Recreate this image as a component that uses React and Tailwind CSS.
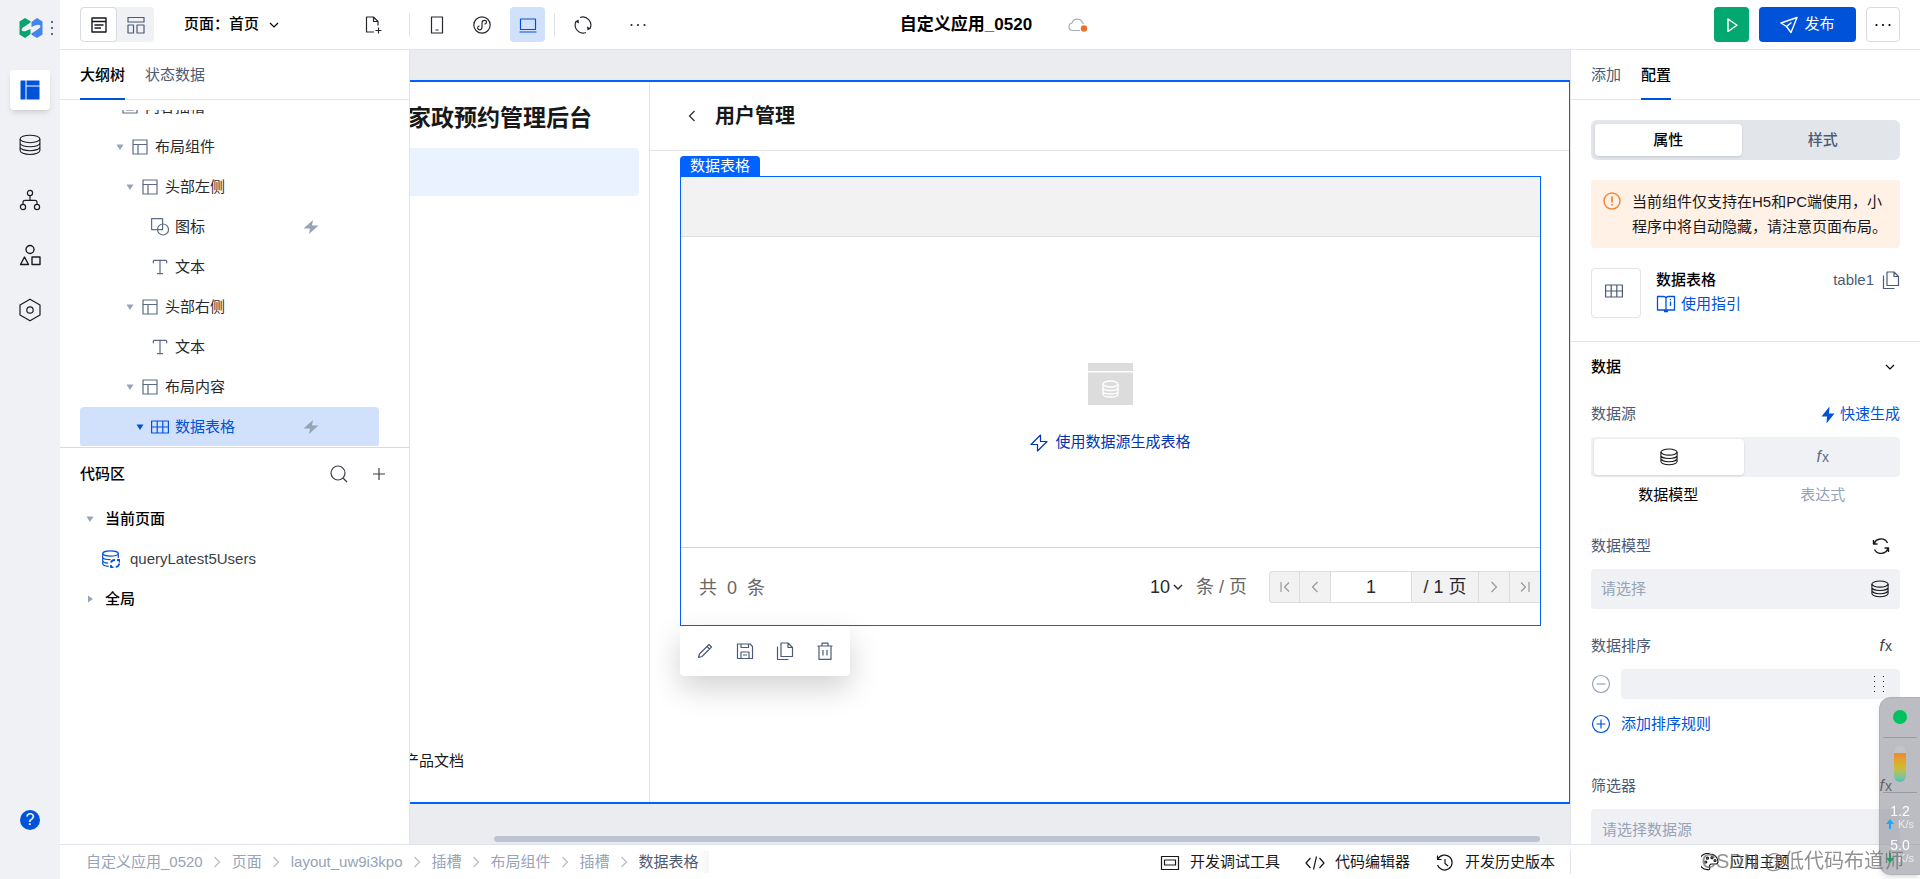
import { useState } from 'react';
import { Type } from 'lucide-react';

const sans = "font-['Liberation_Sans','Noto_Sans_CJK_SC',sans-serif]";

function Icon({ size = 20, box = 20, width = 1.2, className = '', children }) {
  return (
    <svg
      width={size}
      height={size}
      viewBox={`0 0 ${box} ${box}`}
      fill="none"
      stroke="currentColor"
      strokeWidth={width}
      strokeLinejoin="round"
      className={`shrink-0 ${className}`}
      aria-hidden="true"
    >
      {children}
    </svg>
  );
}

const DatabaseIcon = (props) => (
  <Icon {...props}>
    <ellipse cx="10" cy="4.5" rx="9" ry="3.4" />
    <path d="M1 4.5V15c0 2 4 3.6 9 3.6s9-1.6 9-3.6V4.5M1 8.2c0 1.9 4 3.4 9 3.4s9-1.5 9-3.4M1 11.8c0 1.9 4 3.4 9 3.4s9-1.5 9-3.4" />
  </Icon>
);

const LayoutIcon = (props) => (
  <Icon box={18} size={18} {...props}>
    <path d="M2 2h14v14H2zM2 6.5h14M7 6.5V16" />
  </Icon>
);

const ShapesIcon = (props) => (
  <Icon box={18} size={18} {...props}>
    <path d="M.6.6h11v11H.6z" />
    <circle cx="12" cy="11.5" r="5.5" />
  </Icon>
);

const GridIcon = (props) => (
  <Icon box={18} size={18} {...props}>
    <path d="M.6 3h16.8v12H.6zM.6 9h16.8M6.2 3v12M11.8 3v12" />
  </Icon>
);

const TextIcon = (props) => <Type size={20} strokeWidth={1.5} className="-mx-px shrink-0" {...props} />;

const SlotIcon = (props) => (
  <Icon box={18} size={18} {...props}>
    <path d="M2 3h14v12H2zM5 12h8M5 9h8" />
  </Icon>
);

const BoltIcon = (props) => (
  <Icon box={16} size={16} {...props}>
    <path d="M10 1 .5 9.500h6.500L6 15l9.500-8.500H9z" fill="currentColor" stroke="none" />
  </Icon>
);

const BoltOutlineIcon = (props) => (
  <Icon box={18} size={18} {...props}>
    <path d="M10.5 1 1 10.500h6.500V17L17 7.500h-6.500z" />
  </Icon>
);

const ChevronDown = (props) => (
  <Icon box={12} size={12} width={1.4} {...props}>
    <path d="m2 4 4 4 4-4" strokeLinejoin="miter" />
  </Icon>
);

const ChevronRight = (props) => (
  <Icon box={12} size={12} {...props}>
    <path d="m3.5 1 5 5-5 5" strokeLinejoin="miter" />
  </Icon>
);

const ChevronLeft = (props) => (
  <Icon box={12} size={12} {...props}>
    <path d="m8.5 1-5 5 5 5" strokeLinejoin="miter" />
  </Icon>
);

const CopyIcon = (props) => (
  <Icon box={18} size={18} {...props}>
    <path d="M5 1h7l4.5 4.5v9H5zM12 1v4.5h4.5M1.500 4.500v13h11" />
  </Icon>
);

const MoreIcon = (props) => (
  <Icon box={18} size={18} {...props}>
    <g fill="currentColor" stroke="none">
      <circle cx="2.5" cy="9" r="1.1" />
      <circle cx="9" cy="9" r="1.1" />
      <circle cx="15.5" cy="9" r="1.1" />
    </g>
  </Icon>
);

const Fx = ({ className = '' }) => (
  <span className={`inline-flex items-baseline gap-px leading-5 ${className}`}>
    <span className="font-['Liberation_Sans',sans-serif] text-base leading-5 italic">f</span>
    <span className="text-sm leading-5">x</span>
  </span>
);

function Caret({ open = true, className = '' }) {
  return (
    <svg width="12" height="12" viewBox="0 0 12 12" className={`shrink-0 ${className}`} aria-hidden="true">
      <path d={open ? 'M2.500 3.500h7L6 9z' : 'M4 2.500v7L9 6z'} fill="currentColor" />
    </svg>
  );
}

const tree = [
  { label: '内容插槽', icon: SlotIcon, pad: 'pl-[24px]', caret: false },
  { label: '布局组件', icon: LayoutIcon, pad: 'pl-[34px]', caret: true },
  { label: '头部左侧', icon: LayoutIcon, pad: 'pl-[44px]', caret: true },
  { label: '图标', icon: ShapesIcon, pad: 'pl-[54px]', caret: false, bolt: true },
  { label: '文本', icon: TextIcon, pad: 'pl-[54px]', caret: false },
  { label: '头部右侧', icon: LayoutIcon, pad: 'pl-[44px]', caret: true },
  { label: '文本', icon: TextIcon, pad: 'pl-[54px]', caret: false },
  { label: '布局内容', icon: LayoutIcon, pad: 'pl-[44px]', caret: true },
  { label: '数据表格', icon: GridIcon, pad: 'pl-[54px]', caret: true, bolt: true, active: true },
];

const crumbs = ['自定义应用_0520', '页面', 'layout_uw9i3kpo', '插槽', '布局组件', '插槽', '数据表格'];

function Rail() {
  const items = [
    {
      label: '数据源',
      icon: <DatabaseIcon size={22} width={1} />,
    },
    {
      label: '流程',
      icon: (
        <Icon size={22} box={22}>
          <circle cx="11" cy="4" r="2.6" />
          <circle cx="4" cy="18" r="2.6" />
          <circle cx="18" cy="18" r="2.6" />
          <path d="M11 6.6v4.900M4 15.400v-2q0-2 2-2h10q2 0 2 2v2" />
        </Icon>
      ),
    },
    {
      label: '组件',
      icon: (
        <Icon size={22} box={22} width={1.4}>
          <circle cx="11" cy="5.5" r="4" />
          <path d="M5.5 13 9.500 20.500h-8zM13 13h8v7.500h-8z" />
        </Icon>
      ),
    },
    {
      label: '设置',
      icon: (
        <Icon size={24} box={24}>
          <path d="M12 1.200 22 7v10l-10 5.800L2 17V7z" />
          <circle cx="12" cy="12" r="3.2" />
        </Icon>
      ),
    },
  ];

  return (
    <nav className="flex w-15 shrink-0 flex-col items-center bg-[#f0f1f5] pb-[49px]">
      <div className="flex h-[55px] w-full items-center gap-1 pl-[19px]">
        <svg width="24" height="20" viewBox="0 0 23 20" aria-hidden="true">
          <path d="M0 3.500 5.500 0 11 3.200v1.300L3.500 9.500q-2.500 2-.5 3.500 1.500.8 4-.3L11 11v5l-5.500 4L0 16.500z" fill="#07a56d" />
          <path d="M23 16.500 17.500 20 12 16.800v-1.300l7.500-5q2.500-2 .5-3.500-1.500-.8-4 .3L12 9V4l5.500-4L23 3.500z" fill="#4285f0" />
        </svg>
        <button type="button" aria-label="菜单" className="flex flex-col gap-1 px-1">
          <span className="size-0.5 bg-[#5d6b85]" />
          <span className="size-0.5 bg-[#5d6b85]" />
          <span className="size-0.5 bg-[#5d6b85]" />
        </button>
      </div>
      <div className="mt-[15px] flex flex-col gap-[15px]">
        <button type="button" aria-label="页面设计" className="flex size-10 items-center justify-center rounded bg-white shadow-md">
          <svg width="20" height="20" viewBox="0 0 20 20" aria-hidden="true">
            <path d="M1 .5h4.500v19H1q-.5 0-.5-.5V1q0-.5.5-.5zM6.500.5H19q.5 0 .5.5v4.500h-13zM6.500 6.500h13V19q0 .5-.5.5H6.500z" fill="#0052d9" />
          </svg>
        </button>
        {items.map((item) => (
          <button key={item.label} type="button" aria-label={item.label} className="flex size-10 items-center justify-center text-[#1a1c22]">
            {item.icon}
          </button>
        ))}
      </div>
      <button type="button" aria-label="帮助" className="mt-auto size-5 rounded-full bg-[#0052d9] text-center text-base leading-5 text-white">
        ?
      </button>
    </nav>
  );
}

function Header() {
  return (
    <header className="grid h-[50px] shrink-0 grid-cols-[1fr_auto_1fr] items-center border-b border-[#e2e4e8] bg-white px-5">
      <div className="flex items-center">
        <div className="flex h-[35px] items-center rounded bg-[#f0f1f5]">
          <button type="button" aria-label="大纲" className="flex h-[35px] w-[37px] items-center justify-center rounded border border-[#d5dae3] bg-white text-[#15171c]">
            <Icon size={18} box={18} width={1.4}>
              <path d="M2 2h14v14H2zM2 5.500h14M4.500 9h9M4.500 12h6.500" />
            </Icon>
          </button>
          <button type="button" aria-label="布局" className="flex h-[35px] w-[37px] items-center justify-center text-[#4b5b76]">
            <Icon size={18} box={18}>
              <path d="M1 1.500h16V6H1zM1 9h5.500v8H1zM10 9h7v8h-7z" />
            </Icon>
          </button>
        </div>
        <button type="button" className="ml-[30px] flex items-center gap-[9px] text-[15px] font-medium whitespace-nowrap text-black">
          页面：首页
          <ChevronDown width={1.2} />
        </button>
        <button type="button" aria-label="新建页面" className="ml-[85px] text-[#26282e]">
          <Icon size={18} box={18}>
            <path d="M9 16H1.500V1h7L13 5.500v4M8.500 1v4.500H13M13.500 11.500v6M10.500 14.500h6" />
          </Icon>
        </button>
        <span className="ml-[26px] h-6 w-px bg-[#dfe2e8]" />
        <button type="button" aria-label="手机" className="ml-[18px] text-[#26282e]">
          <Icon size={18} box={18}>
            <path d="M3.500 1h11v16h-11zM7.500 14h3" />
          </Icon>
        </button>
        <button type="button" aria-label="小程序" className="ml-[27px] text-[#26282e]">
          <Icon size={18} box={18}>
            <circle cx="9" cy="9" r="8.2" />
            <path d="M11.500 8.300c3-.9 2.500-4 0-4S9 6.300 9 7v4c0 1-.5 2.800-2.500 2.800s-3-3 0-4" />
          </Icon>
        </button>
        <button type="button" aria-label="电脑" className="ml-[19px] flex size-[35px] items-center justify-center rounded bg-[#d2e1fb] text-[#0052d9]">
          <Icon size={18} box={18}>
            <path d="M1.500 3h15v10.500h-15zM.5 16h17" />
          </Icon>
        </button>
        <span className="ml-[9px] h-6 w-px bg-[#dfe2e8]" />
        <button type="button" aria-label="刷新" className="ml-[19px] text-[#26282e]">
          <Icon size={18} box={18}>
            <path d="M6 1.500A8 8 0 0 1 16 12.500M12 16.500A8 8 0 0 1 2 5.500" />
            <path d="M1 5.500 4.500 3.500 5 7.500zM17 12.500 13.500 14.500 13 10.500z" fill="currentColor" stroke="none" />
          </Icon>
        </button>
        <button type="button" aria-label="更多" className="ml-[37px] text-[#26282e]">
          <MoreIcon />
        </button>
      </div>

      <div className="flex items-center pl-2">
        <h1 className="text-[17px] font-bold text-black">自定义应用_0520</h1>
        <button type="button" aria-label="未保存" className="ml-9">
          <svg width="20" height="16" viewBox="0 0 20 16" aria-hidden="true">
            <path d="M12 13.500H4.500a3.800 3.800 0 0 1-.5-7.500 5.500 5.500 0 0 1 10.500 0q.5 0 1.500.5" fill="none" stroke="#a3adbd" strokeWidth="1.2" />
            <circle cx="16" cy="11.500" r="3.2" fill="#eb6f2d" />
          </svg>
        </button>
      </div>

      <div className="flex items-center justify-end gap-[10px]">
        <button type="button" aria-label="预览" className="flex size-[35px] items-center justify-center rounded bg-[#02a870] text-white">
          <Icon size={18} box={18} width={1.5}>
            <path d="M5 3v12.500l9-6.250z" />
          </Icon>
        </button>
        <button type="button" className="flex h-[35px] w-[97px] items-center justify-center gap-1.5 rounded bg-[#0052d9] text-[15px] text-white">
          <Icon size={18} box={18} width={1.4}>
            <path d="M17 1.500 1 7l5.500 3.500L11 16.500zM6.500 10.500l5-4" />
          </Icon>
          发布
        </button>
        <button type="button" aria-label="更多操作" className="flex h-[35px] w-[34px] items-center justify-center rounded border border-[#d5dae3] text-black">
          <MoreIcon />
        </button>
      </div>
    </header>
  );
}

function OutlinePanel() {
  return (
    <aside className="flex w-[350px] shrink-0 flex-col border-r border-[#e2e4e8] bg-white">
      <div className="flex h-[50px] shrink-0 gap-5 border-b border-[#e2e4e8] px-5 text-[15px]">
        <button type="button" className="-mb-px border-b-2 border-[#0052d9] pt-[3px] font-medium text-black">大纲树</button>
        <button type="button" className="-mb-px border-b-2 border-transparent pt-[3px] text-[#4b5b76]">状态数据</button>
      </div>

      <div className="mt-[10px] mb-px h-[336px] shrink-0 overflow-hidden pr-[30px] pl-5">
        <ul className="-mt-[23px]">
          {tree.map((node, i) => (
            <li
              key={i}
              className={`flex h-10 items-center pr-[60px] text-[15px] ${node.pad} ${node.active ? 'rounded bg-[#d2e1fb] text-[#0052d9]' : 'text-[#26282e]'}`}
            >
              <span className={`mr-[5px] w-3 ${node.active ? '' : 'text-[#97a3b7]'}`}>
                {node.caret && <Caret />}
              </span>
              <span className={node.active ? '' : 'text-[#5d6b85]'}>
                <node.icon />
              </span>
              <span className="ml-1.5">{node.label}</span>
              {node.bolt && <BoltIcon className="ml-auto text-[#97a3b7]" />}
            </li>
          ))}
        </ul>
      </div>

      <section className="flex-1 border-t border-[#d5d9e2]">
        <div className="flex h-[51px] items-center pt-px pr-[21px] pl-5">
          <h2 className="flex-1 text-[15px] font-medium text-black">代码区</h2>
          <button type="button" aria-label="搜索" className="text-[#3c3f47]">
            <Icon size={18} box={18}>
              <circle cx="8" cy="8" r="7" />
              <path d="m13 13 4 4" />
            </Icon>
          </button>
          <button type="button" aria-label="新增" className="ml-[22px] text-[#3c3f47]">
            <Icon size={18} box={18}>
              <path d="M9 3v12M3 9h12" />
            </Icon>
          </button>
        </div>
        <ul className="pl-6 text-[15px]">
          <li className="flex h-10 items-center gap-[9px] font-medium text-black">
            <Caret className="text-[#97a3b7]" />
            当前页面
          </li>
          <li className="flex h-10 items-center gap-[10px] pl-[18px] text-[#3c3f47]">
            <Icon size={18} box={18} className="text-[#0052d9]">
              <ellipse cx="8.5" cy="3.5" rx="7.8" ry="2.7" />
              <path d="M.7 3.500v10c0 1.500 2.500 2.700 6 2.800M16.300 3.500V8M.7 7c0 1.500 3.500 2.700 7.800 2.700M.7 10.500c0 1.500 2.500 2.500 5.500 2.700" />
              <path d="M9 12.500a4 4 0 0 1 4-2.500M9 15v2.300h2.500M17.300 13.500a4 4 0 0 1-3.500 3.500M17.500 12.500V10H15" strokeWidth="1.8" />
            </Icon>
            queryLatest5Users
          </li>
          <li className="flex h-10 items-center gap-[9px] font-medium text-black">
            <Caret open={false} className="text-[#97a3b7]" />
            全局
          </li>
        </ul>
      </section>
    </aside>
  );
}

function Pagination() {
  const [page, setPage] = useState('1');
  const arrow = 'flex w-[31px] items-center justify-center border-l border-[#dcdcdc] text-[#999]';

  return (
    <div className="flex h-[77px] items-center justify-between pl-[18px] text-lg">
      <p className="pt-[3px] text-[#666]">共&nbsp; 0 &nbsp;条</p>
      <div className="flex items-center pt-px">
        <label className="relative flex items-center text-[#26282e]">
          <select defaultValue="10" aria-label="每页条数" className="w-[34px] appearance-none bg-transparent">
            <option>10</option>
            <option>20</option>
          </select>
          <ChevronDown className="pointer-events-none absolute right-0" />
        </label>
        <span className="ml-3 text-[#666]">条 / 页</span>
        <div className="ml-[22px] flex h-8 overflow-hidden rounded-l border border-r-0 border-[#dcdcdc] bg-[#f2f2f2]">
          <button type="button" aria-label="第一页" className="flex w-[29px] items-center justify-center text-[#999]">
            <Icon size={12} box={12}><path d="M2 1v10M10 1.500 5.500 6l4.500 4.500" /></Icon>
          </button>
          <button type="button" aria-label="上一页" className={arrow}><ChevronLeft /></button>
          <input
            aria-label="页码"
            value={page}
            onChange={(e) => setPage(e.target.value)}
            className="w-[81px] border-l border-[#dcdcdc] bg-white text-center text-[#26282e]"
          />
          <span className="flex w-[67px] items-center justify-center border-l border-[#dcdcdc] text-[#26282e]">/ 1 页</span>
          <button type="button" aria-label="下一页" className={arrow}><ChevronRight /></button>
          <button type="button" aria-label="最后一页" className={arrow}>
            <Icon size={12} box={12}><path d="M10 1v10M2 1.500 6.500 6 2 10.500" /></Icon>
          </button>
        </div>
      </div>
    </div>
  );
}

function Canvas() {
  return (
    <main className="flex min-w-0 flex-1 flex-col overflow-hidden bg-[#ebecf0] pt-[30px]">
      <div className="flex min-h-0 flex-1 border-y-2 border-r border-[#0062ff] bg-white">
        <div className="flex w-60 shrink-0 flex-col overflow-hidden border-r border-[#e2e4e8] pr-[10px] pb-[27px]">
          <h2 className="-ml-0.5 flex h-[66px] items-center pt-1.5 text-[23px] font-bold whitespace-nowrap text-[#181818]">家政预约管理后台</h2>
          <div className="h-12 rounded-r bg-[#ebf2ff]" />
          <a href="#docs" className="mt-auto -ml-1.5 text-[15px] leading-7 text-[#181818]">产品文档</a>
        </div>

        <div className="flex min-w-0 flex-1 flex-col">
          <div className="flex h-[69px] shrink-0 items-center border-b border-[#e2e4e8] pl-9 text-xl font-bold text-[#181818]">
            <button type="button" aria-label="返回"><ChevronLeft className="text-[#26282e]" /></button>
            <h2 className="ml-[17px]">用户管理</h2>
          </div>

          <div className="flex flex-col items-start pt-[5px] pr-7 pl-[30px]">
            <span className="h-5 rounded-t bg-[#0062ff] px-[10px] text-[15px] leading-5 text-white">数据表格</span>
            <div className="w-full border border-[#0062ff]">
              <table className="w-full border-b border-[#d2d2d2]">
                <thead>
                  <tr className="h-[59px] border-b border-[#dcdcdc] bg-[#f2f2f2]">
                    <th aria-label="列" />
                  </tr>
                </thead>
                <tbody>
                  <tr className="h-[311px]">
                    <td className="pt-[34px] align-middle">
                      <div className="flex flex-col items-center">
                        <svg width="45" height="42" viewBox="0 0 45 42" aria-hidden="true">
                          <path d="M0 0h45v8H0zM0 9.500h45V42H0z" fill="#dcdcdc" />
                          <g fill="none" stroke="#fff" strokeWidth="1.3">
                            <ellipse cx="22.5" cy="21" rx="7.5" ry="3" />
                            <path d="M15 21v10c0 1.700 3.300 3 7.500 3s7.500-1.300 7.500-3V21M15 24.500c0 1.700 3.300 3 7.500 3s7.500-1.300 7.500-3M15 28c0 1.700 3.300 3 7.500 3s7.500-1.300 7.500-3" />
                          </g>
                        </svg>
                        <button type="button" className="mt-[26px] flex items-center gap-[7px] text-[15px] text-[#0034b5]">
                          <BoltOutlineIcon />
                          使用数据源生成表格
                        </button>
                      </div>
                    </td>
                  </tr>
                </tbody>
              </table>
              <Pagination />
            </div>
            <div className="flex h-[50px] w-[170px] items-center justify-between rounded-b bg-white px-4 text-[#4b5b76] shadow-[0_12px_30px_rgba(0,0,0,0.18)]">
              <button type="button" aria-label="编辑">
                <Icon size={18} box={18}><path d="M2.500 15.500 3.500 12 13 2.500 15.500 5 6 14.500zM11 4.500 13.500 7" /></Icon>
              </button>
              <button type="button" aria-label="保存">
                <Icon size={18} box={18}><path d="M1.500 2H14l2.500 2.500v12h-15zM5 2v3.500h7.500V2M5 16.500V10h8v6.500M7 13h4" /></Icon>
              </button>
              <button type="button" aria-label="复制"><CopyIcon /></button>
              <button type="button" aria-label="删除">
                <Icon size={18} box={18}><path d="M1.500 4h15M3 4v13.400h12V4M6 4V1.200h6V4M7 8v5.500M11 8v5.500" /></Icon>
              </button>
            </div>
          </div>
        </div>
      </div>
      <div className="flex h-10 shrink-0 items-end pr-[30px] pb-0.5 pl-[84px]">
        <div className="h-1.5 w-full rounded-full bg-[#bcc4d0]" />
      </div>
    </main>
  );
}

function ConfigPanel() {
  return (
    <aside className="flex w-[350px] shrink-0 flex-col overflow-hidden border-l border-[#e2e4e8] bg-white text-[15px]">
      <div className="flex h-[50px] shrink-0 gap-5 border-b border-[#e2e4e8] px-5">
        <button type="button" className="-mb-px border-b-2 border-transparent pt-[3px] text-[#4b5b76]">添加</button>
        <button type="button" className="-mb-px border-b-2 border-[#0052d9] pt-[3px] font-medium text-black">配置</button>
      </div>

      <div className="border-b border-[#e2e4e8] px-5 pt-5 pb-[23px]">
        <div className="grid h-10 grid-cols-2 gap-2 rounded-md bg-[#e2e5ea] p-1 font-medium">
          <button type="button" className="rounded-sm bg-white text-black shadow-sm">属性</button>
          <button type="button" className="text-[#4b5b76]">样式</button>
        </div>

        <div className="mt-5 flex gap-[11px] rounded bg-[#fff1e5] px-3 py-[9px] leading-[25px] text-[#181818]">
          <Icon size={18} box={18} width={1.5} className="mt-[3px] text-[#f0883a]">
            <circle cx="9" cy="9" r="8" />
            <path d="M9 4.500v6M9 12v1.500" strokeWidth="1.8" />
          </Icon>
          <p>当前组件仅支持在H5和PC端使用，小程序中将自动隐藏，请注意页面布局。</p>
        </div>

        <div className="mt-5 flex">
          <span className="flex size-[50px] items-center justify-center rounded border border-[#e2e4e8] pr-1 pb-1 text-[#4b5b76]">
            <GridIcon />
          </span>
          <div className="ml-[15px] flex-1 leading-6">
            <p className="font-medium text-black">数据表格</p>
            <a href="#guide" className="flex items-center gap-[5px] text-[#0052d9]">
              <Icon size={20} box={20} width={1.3}>
                <path d="M1.500 2.500h6q2 0 2.500 1.500.5-1.500 2.500-1.500h6V16h-17zM10 4v12M8 17.500h4M14.500 7.500V12M14.500 5v1.200" />
              </Icon>
              使用指引
            </a>
          </div>
          <span className="flex h-6 items-center gap-2 text-[#4b5b76]">
            table1
            <button type="button" aria-label="复制标识"><CopyIcon /></button>
          </span>
        </div>
      </div>

      <div className="px-5">
        <div className="flex h-[50px] items-center justify-between pr-1">
          <h3 className="font-medium text-black">数据</h3>
          <button type="button" aria-label="收起"><ChevronDown width={1.2} /></button>
        </div>

        <div className="flex h-[45px] items-center justify-between">
          <span className="text-[#4b5b76]">数据源</span>
          <button type="button" className="flex items-center gap-1 text-[#0052d9]">
            <Icon size={16} box={16}>
              <path d="M9.500-.5 1.500 9.500H7L6.500 16.500l8-10H9z" fill="currentColor" stroke="none" />
            </Icon>
            快速生成
          </button>
        </div>
        <div className="grid grid-cols-2 text-center">
          <div className="flex h-10 rounded-l bg-[#f0f1f5] py-[2px] pr-[2px] pl-[3px]">
            <button type="button" aria-label="数据模型" className="flex flex-1 items-center justify-center rounded bg-white text-[#181818] shadow-sm">
              <DatabaseIcon size={18} />
            </button>
          </div>
          <button type="button" aria-label="表达式" className="h-10 rounded-r bg-[#f0f1f5] text-[#5d6b85]">
            <Fx />
          </button>
          <span className="pt-[7px] leading-[22px] text-black">数据模型</span>
          <span className="pt-[7px] leading-[22px] text-[#97a3b7]">表达式</span>
        </div>

        <div className="mt-[17px] flex h-[46px] items-center justify-between pr-[10px] text-[#4b5b76]">
          <label htmlFor="model">数据模型</label>
          <button type="button" aria-label="刷新数据模型" className="text-[#181818]">
            <Icon size={18} box={18} width={1.4}>
              <path d="M2 7a7.300 7.300 0 0 1 13.500-1M16 11A7.300 7.300 0 0 1 2.500 12.500M1.500 3v4h4M16.500 15v-4h-4" />
            </Icon>
          </button>
        </div>
        <div className="flex h-10 items-center rounded bg-[#f0f1f5] pr-[11px] pl-[10px] text-[#181818]">
          <input id="model" readOnly placeholder="请选择" className="min-w-0 flex-1 bg-transparent placeholder:text-[#97a3b7]" />
          <DatabaseIcon size={18} />
        </div>

        <div className="mt-[14px] flex h-[46px] items-center justify-between pr-2 text-[#4b5b76]">
          <label htmlFor="sort">数据排序</label>
          <button type="button" aria-label="排序表达式"><Fx className="text-[#3c3f47]" /></button>
        </div>
        <div className="flex items-center gap-[10px]">
          <button type="button" aria-label="删除规则" className="text-[#97a3b7]">
            <Icon size={20} box={20}>
              <circle cx="10" cy="10" r="8.5" />
              <path d="M5.500 10h9" />
            </Icon>
          </button>
          <div className="flex h-[30px] flex-1 items-center rounded bg-[#f0f1f5] pr-[14px]">
            <input id="sort" className="min-w-0 flex-1 bg-transparent" />
            <svg width="14" height="18" viewBox="0 0 14 18" fill="#26282e" aria-hidden="true">
              {[1, 6, 11, 16].map((y) => (
                <g key={y}>
                  <rect x="2" y={y} width="1" height="1" />
                  <rect x="11" y={y} width="1" height="1" />
                </g>
              ))}
            </svg>
          </div>
        </div>
        <button type="button" className="mt-[10px] flex h-[30px] items-center gap-[10px] text-[#0052d9]">
          <Icon size={20} box={20}>
            <circle cx="10" cy="10" r="8.5" />
            <path d="M5.500 10h9M10 5.500v9" />
          </Icon>
          添加排序规则
        </button>

        <div className="mt-6 flex h-[46px] items-center justify-between pr-2 text-[#4b5b76]">
          <label htmlFor="filter">筛选器</label>
          <button type="button" aria-label="筛选表达式"><Fx className="text-[#181818]" /></button>
        </div>
        <input id="filter" readOnly placeholder="请选择数据源" className="h-10 w-full rounded bg-[#f0f1f5] px-[11px] placeholder:text-[#97a3b7]" />
      </div>
    </aside>
  );
}

function Footer() {
  return (
    <footer className="flex h-[35px] shrink-0 items-center border-t border-[#dfe2ea] bg-white text-[15px] whitespace-nowrap text-[#181818]">
      <nav className="flex flex-1 items-center pl-[26px]">
        {crumbs.map((crumb, i) => (
          <span key={i} className="flex items-center">
            {i > 0 && (
              <span className="flex w-[29px] justify-center text-[#b4bdcb]">
                <ChevronRight />
              </span>
            )}
            <a href="#crumb" className={i === crumbs.length - 1 ? 'bg-linear-to-r from-white from-80% to-[#f5f6f9] pr-[10px] text-[#4b5b76]' : 'text-[#97a3b7]'}>
              {crumb}
            </a>
          </span>
        ))}
      </nav>
      <div className="flex items-center gap-[25px] pr-[15px]">
        <button type="button" className="flex items-center gap-[10px]">
          <Icon size={20} box={20}><path d="M1.500 4.500h17v13h-17zM4.500 8h11v5h-11z" /></Icon>
          开发调试工具
        </button>
        <button type="button" className="flex items-center gap-[10px]">
          <Icon size={20} box={20}><path d="M5.500 6 1 11l4.500 5M14.500 6l4.500 5-4.500 5M11.500 4.500l-3 13" /></Icon>
          代码编辑器
        </button>
        <button type="button" className="flex items-center gap-[10px]">
          <Icon size={20} box={20}><path d="M3 7a7.500 7.500 0 1 1-.5 6M2.500 3.500v4h4M10 7v4.500l3 2.500" /></Icon>
          开发历史版本
        </button>
      </div>
      <div className="flex h-6 w-[350px] items-center justify-center border-l border-[#dfe2e8]">
        <button type="button" className="flex items-center gap-[10px]">
          <Icon size={18} box={18}>
            <path d="M9 1a8 8 0 1 0-2 15.500c1.500.5 2-.5 1.500-2-.5-2 .5-3.500 2.500-3.500h3.500c1.500 0 2.500-.5 2.500-2.500A8 8 0 0 0 9 1z" />
            <circle cx="4.8" cy="9" r="1" />
            <circle cx="6.5" cy="5.2" r="1" />
            <circle cx="11" cy="4.7" r="1" />
            <circle cx="14" cy="7.5" r="1" />
          </Icon>
          应用主题
        </button>
      </div>
    </footer>
  );
}

function SpeedMeter() {
  return (
    <div className="fixed right-0 bottom-1 flex h-[178px] w-[41px] flex-col items-center rounded-l-xl border border-r-0 border-[#a9aaae]/60 bg-[#90919a]/60 text-white shadow-md">
      <span className="mt-3 size-[14px] shrink-0 rounded-full bg-[#00c25e]" />
      <span className="mt-[13px] h-px w-[34px] shrink-0 bg-[#98999f]" />
      <span className="mt-2 h-9 w-3 shrink-0 overflow-hidden rounded-full bg-[#c3c4c8] pt-[7px]">
        <span className="block h-full bg-linear-to-b from-[#ee8a2e] via-[#cdbc2c] to-[#3fc3b8]" />
      </span>
      <span className="mt-[10px] h-px w-[34px] shrink-0 bg-[#98999f]" />
      <span className="mt-[10px] text-sm leading-4">1.2</span>
      <span className="flex items-center gap-1 text-[11px] leading-[10px] text-white/70">
        <svg width="8" height="10" viewBox="0 0 8 10" aria-hidden="true"><path d="M4 0 8 5H5v5H3V5H0z" fill="#19a9ff" /></svg>
        K/s
      </span>
      <span className="mt-2 text-sm leading-4">5.0</span>
      <span className="flex items-center gap-1 text-[11px] leading-[10px] text-white/70">
        <svg width="8" height="10" viewBox="0 0 8 10" aria-hidden="true"><path d="M4 10 8 5H5V0H3v5H0z" fill="#11b15a" /></svg>
        K/s
      </span>
    </div>
  );
}

export default function App() {
  return (
    <div className={`flex h-screen overflow-hidden bg-white ${sans}`}>
      <Rail />
      <div className="flex min-w-0 flex-1 flex-col">
        <Header />
        <div className="flex min-h-0 flex-1">
          <OutlinePanel />
          <Canvas />
          <ConfigPanel />
        </div>
        <Footer />
      </div>
      <SpeedMeter />
      <span className="pointer-events-none fixed right-4 bottom-1 text-[20px] leading-7 whitespace-nowrap text-[#6e6e6e]/75">CSDN @低代码布道师</span>
    </div>
  );
}
